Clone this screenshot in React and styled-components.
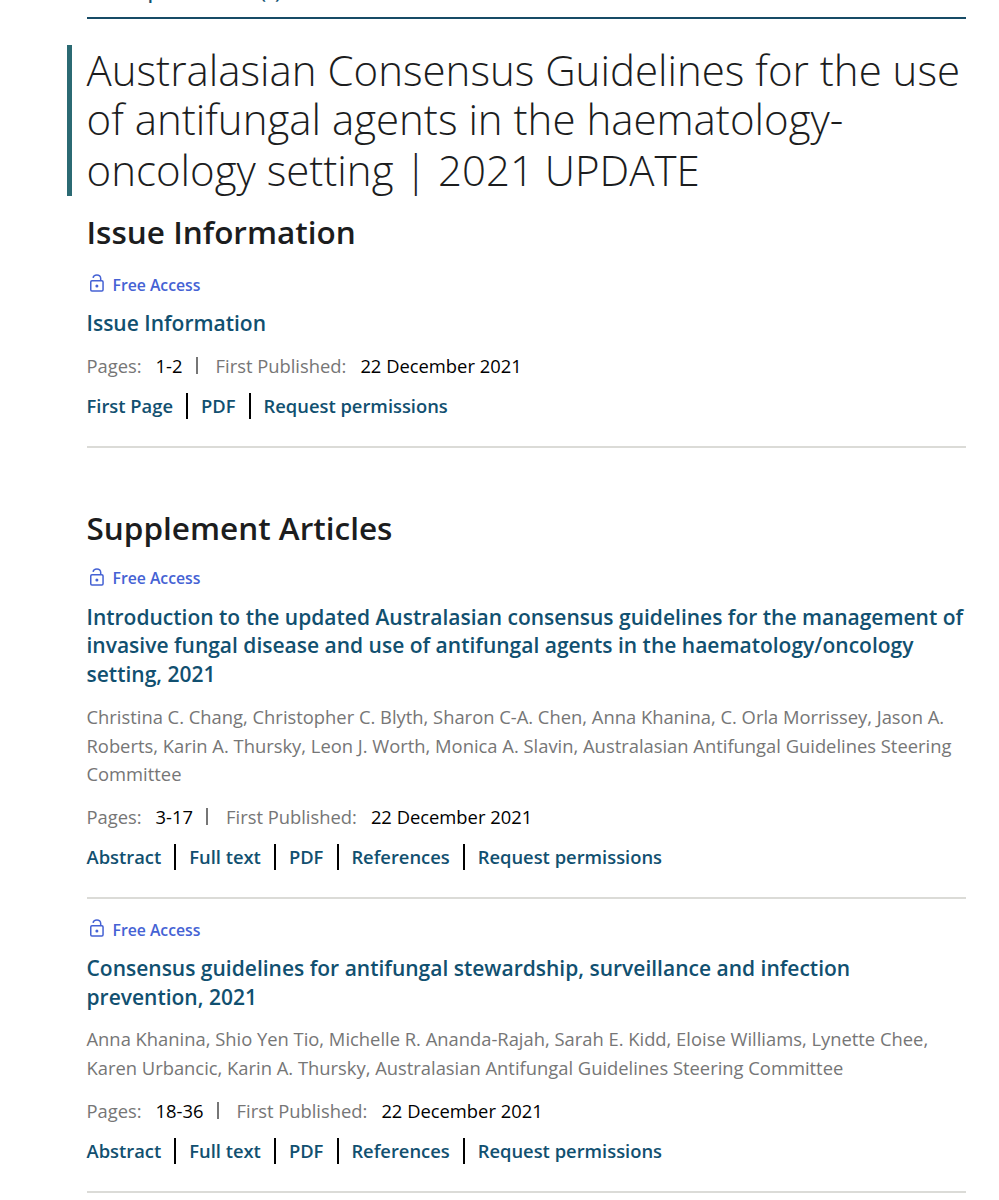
import React from 'react';
import styled, { createGlobalStyle } from 'styled-components';

const GlobalStyle = createGlobalStyle`
  body {
    margin: 0;
    background: #fff;
    color: #1c1d1e;
    font-family: 'Open Sans', 'Noto Sans', sans-serif;
  }
`;

const Page = styled.main`
  box-sizing: border-box;
  width: 999px;
  height: 1200px;
  overflow: hidden;
  padding: 0 33px 0 86.5px;
`;

const TopBar = styled.div`
  display: flex;
  align-items: flex-start;
  height: 17px;
  border-bottom: 2px solid #174b66;
  font-size: 18.375px;
  font-weight: 600;
  line-height: 26px;
  color: #115070;
`;

const ExportLink = styled.a`
  margin: -21px 0 0 41px;
  white-space: nowrap;
`;

const Title = styled.h1`
  margin: 26px 0 0 -20px;
  padding: 0 0 1px 15px;
  border-left: 5px solid #2b6a73;
  font-size: 42px;
  font-weight: 300;
  line-height: 50px;
`;

const Line = styled.span`
  display: block;
  width: max-content;
  margin: ${(p) => (p.$raised ? '-1px 0 1px' : 0)};
  white-space: nowrap;
`;

const Heading = styled.h2`
  margin: ${(p) => p.$top}px 0 0;
  font-size: 31.5px;
  font-weight: 600;
  line-height: 44px;
`;

const Item = styled.article`
  box-sizing: border-box;
  height: ${(p) => p.$height}px;
  padding-top: ${(p) => p.$top}px;
  border-bottom: 2px solid #dbdbd7;
`;

const Access = styled.div`
  display: flex;
  align-items: center;
  height: 24px;
  padding-left: 3px;
  gap: 9px;
  font-size: 15.75px;
  font-weight: 600;
  color: #4562d4;
`;

const ArticleTitle = styled.h3`
  margin: 12.5px 0 0;
  font-size: 21px;
  font-weight: 600;
  line-height: 28.875px;
  color: #115070;
`;

const Authors = styled.p`
  margin: 13.5px 0 0;
  font-size: 18.375px;
  line-height: 28.875px;
  color: #767676;
`;

const Meta = styled.div`
  display: flex;
  align-items: center;
  height: 28px;
  margin-top: 13.5px;
  font-size: 18.375px;
  color: #767676;
  white-space: nowrap;
`;

const Value = styled.span`
  margin-left: 14px;
  color: #000;
`;

const Pipe = styled.span`
  width: 2px;
  height: 17px;
  margin: 0 18px 0 13px;
  background: #767676;
`;

const Links = styled.div`
  display: flex;
  align-items: center;
  height: 26px;
  margin-top: 13.5px;
`;

const Link = styled.a`
  display: flex;
  align-items: center;
  height: 26px;
  font-size: 18.375px;
  font-weight: 600;
  line-height: 26px;
  color: #115070;
  white-space: nowrap;

  & + &::before {
    content: '';
    width: 2px;
    height: 26px;
    margin: 0 12.8px 0 13.2px;
    background: #000;
  }
`;

const Lock = styled.svg`
  margin-bottom: 2px;
`;

const LockIcon = () => (
  <Lock width="14" height="19" viewBox="0 0 14 19" fill="none" stroke="#4562d4" strokeWidth="1.5">
    <rect x="0.75" y="6.8" width="12.3" height="10.2" rx="1.2" />
    <path d="M3.1 3.9C3.3 2 4.8 0.9 6.9 0.9c2.2 0 3.8 1.4 3.8 3.6v2.3" />
    <circle cx="6.9" cy="12" r="1.5" fill="#4562d4" stroke="none" />
  </Lock>
);

const Article = ({ top, height, title, authors, pages, links }) => (
  <Item $top={top} $height={height}>
    <Access>
      <LockIcon />
      Free Access
    </Access>
    <ArticleTitle>
      {title.map((line) => <Line key={line}>{line}</Line>)}
    </ArticleTitle>
    {authors && (
      <Authors>
        {authors.map((line) => <Line key={line}>{line}</Line>)}
      </Authors>
    )}
    <Meta>
      Pages:
      <Value>{pages}</Value>
      <Pipe />
      First Published:
      <Value>22 December 2021</Value>
    </Meta>
    <Links>
      {links.map((link) => <Link key={link}>{link}</Link>)}
    </Links>
  </Item>
);

const articleLinks = ['Abstract', 'Full text', 'PDF', 'References', 'Request permissions'];

const App = () => (
  <>
    <GlobalStyle />
    <Page>
      <TopBar>
        <ExportLink>Export Citation(s)</ExportLink>
      </TopBar>
      <Title>
        <Line>Australasian Consensus Guidelines for the use</Line>
        <Line $raised>of antifungal agents in the haematology-</Line>
        <Line>oncology setting | 2021 UPDATE</Line>
      </Title>
      <Heading $top={14}>Issue Information</Heading>
      <Article
        top={18.5}
        height={194}
        title={['Issue Information']}
        pages="1-2"
        links={['First Page', 'PDF', 'Request permissions']}
      />
      <Heading $top={58}>Supplement Articles</Heading>
      <Article
        top={16}
        height={349}
        title={[
          'Introduction to the updated Australasian consensus guidelines for the management of',
          'invasive fungal disease and use of antifungal agents in the haematology/oncology',
          'setting, 2021',
        ]}
        authors={[
          'Christina C. Chang, Christopher C. Blyth, Sharon C-A. Chen, Anna Khanina, C. Orla Morrissey, Jason A.',
          'Roberts, Karin A. Thursky, Leon J. Worth, Monica A. Slavin, Australasian Antifungal Guidelines Steering',
          'Committee',
        ]}
        pages="3-17"
        links={articleLinks}
      />
      <Article
        top={18.5}
        height={294}
        title={[
          'Consensus guidelines for antifungal stewardship, surveillance and infection',
          'prevention, 2021',
        ]}
        authors={[
          'Anna Khanina, Shio Yen Tio, Michelle R. Ananda-Rajah, Sarah E. Kidd, Eloise Williams, Lynette Chee,',
          'Karen Urbancic, Karin A. Thursky, Australasian Antifungal Guidelines Steering Committee',
        ]}
        pages="18-36"
        links={articleLinks}
      />
    </Page>
  </>
);

export default App;
